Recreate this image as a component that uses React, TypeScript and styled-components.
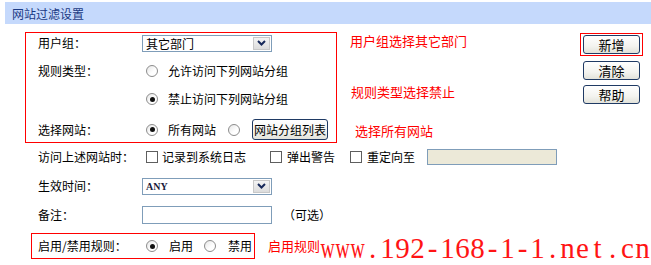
import React from "react";
import styled, { createGlobalStyle } from "styled-components";

const GlobalStyle = createGlobalStyle`
  html, body { margin: 0; padding: 0; background: #fff; }
  body {
    font-family: "Noto Sans CJK SC", "Noto Sans", sans-serif;
    font-size: 12px;
    color: #000;
  }
  * { box-sizing: border-box; }
`;

const Page = styled.div`
  position: relative;
  width: 651px;
  height: 265px;
  overflow: hidden;
`;

const TitleBar = styled.div`
  margin: 2px 0 0 5px;
  height: 22px;
  background: #c5d9fc;
  display: flex;
  align-items: center;
  padding-left: 7px;
  font-size: 12px;
  color: #1b3a84;
`;

const TopSection = styled.div`
  display: flex;
  align-items: flex-start;
  margin-top: 8px;
`;

const RedBox = styled.div<{ $left: number; $width: number }>`
  margin-left: ${(p) => p.$left}px;
  width: ${(p) => p.$width}px;
  border: 1px solid #ff0000;
  flex: none;
`;

const Row = styled.div<{ $h: number; $pt?: number; $pl?: number }>`
  display: flex;
  align-items: center;
  height: ${(p) => p.$h}px;
  padding-top: ${(p) => p.$pt ?? 0}px;
  padding-left: ${(p) => p.$pl ?? 0}px;
  white-space: nowrap;
`;

const Label = styled.span`
  width: 104px;
  flex: none;
  line-height: 16px;
`;

const Text = styled.span<{ $ml?: number }>`
  margin-left: ${(p) => p.$ml ?? 0}px;
  line-height: 16px;
`;

const Radio = styled.span<{ $checked?: boolean; $ml?: number }>`
  position: relative;
  flex: none;
  width: 12px;
  height: 12px;
  margin-left: ${(p) => p.$ml ?? 4}px;
  border-radius: 50%;
  border: 1px solid #8c8c8c;
  background: linear-gradient(135deg, #e6e6e6, #ffffff 60%);
  &::after {
    content: "";
    display: ${(p) => (p.$checked ? "block" : "none")};
    position: absolute;
    left: 2.5px;
    top: 2.5px;
    width: 5px;
    height: 5px;
    border-radius: 50%;
    background: #111;
  }
`;

const Checkbox = styled.span<{ $ml?: number }>`
  flex: none;
  width: 12px;
  height: 12px;
  margin-left: ${(p) => p.$ml ?? 4}px;
  border: 1px solid #5e5e5e;
  background: #fff;
`;

const SelectBox = styled.div`
  display: flex;
  align-items: stretch;
  width: 130px;
  height: 17px;
  border: 1px solid #7f9db9;
  background: #fff;
`;

const SelectValue = styled.span<{ $latin?: boolean }>`
  flex: 1;
  padding-left: 3px;
  display: flex;
  align-items: center;
  font-family: ${(p) =>
    p.$latin ? '"Liberation Serif", serif' : '"Noto Sans CJK SC", sans-serif'};
  font-weight: ${(p) => (p.$latin ? 700 : 400)};
  font-size: ${(p) => (p.$latin ? "10px" : "12px")};
  color: ${(p) => (p.$latin ? "#1a1a3a" : "#000")};
  line-height: 15px;
`;

const SelectArrow = styled.span`
  width: 17px;
  margin: 1px;
  display: flex;
  align-items: center;
  justify-content: center;
  background: linear-gradient(#f4f4f4, #dcdcdc);
  border: 1px solid #c8c8c8;
`;

const TextInput = styled.div<{ $w: number; $h: number; $ml?: number; $disabled?: boolean }>`
  flex: none;
  width: ${(p) => p.$w}px;
  height: ${(p) => p.$h}px;
  margin-left: ${(p) => p.$ml ?? 0}px;
  border: 1px solid #7f9db9;
  background: ${(p) => (p.$disabled ? "#ece9d8" : "#fff")};
`;

const Button = styled.button<{ $w: number; $h: number; $ml?: number; $mt?: number; $fs?: number }>`
  flex: none;
  width: ${(p) => p.$w}px;
  height: ${(p) => p.$h}px;
  margin-left: ${(p) => p.$ml ?? 0}px;
  margin-top: ${(p) => p.$mt ?? 0}px;
  padding: 0;
  border: 1px solid #1f3a64;
  border-radius: 3px;
  background: linear-gradient(#ffffff, #f3f3ef 60%, #e2e2da);
  font-family: "Noto Sans CJK SC", sans-serif;
  font-size: ${(p) => p.$fs ?? 13}px;
  line-height: 1;
  color: #000;
  display: flex;
  align-items: center;
  justify-content: center;
`;

const NotesColumn = styled.div`
  flex: 1;
  margin-left: 13px;
  display: flex;
  flex-direction: column;
  align-items: flex-start;
`;

const Note = styled.span<{ $mt?: number; $ml?: number }>`
  margin-top: ${(p) => p.$mt ?? 0}px;
  margin-left: ${(p) => p.$ml ?? 0}px;
  color: #ff0000;
  font-size: 13px;
  line-height: 16px;
  white-space: nowrap;
`;

const ButtonsColumn = styled.div`
  flex: none;
  width: 63px;
  margin-right: 8px;
  margin-top: 1px;
  display: flex;
  flex-direction: column;
  align-items: flex-start;
`;

const RedFrame = styled.div`
  border: 1px solid #ff0000;
  padding: 1px 2px;
`;

const BottomRow = styled.div`
  display: flex;
  align-items: center;
  margin-top: 4px;
`;

const Watermark = styled.div`
  position: absolute;
  left: 320px;
  top: 233px;
  display: flex;
  font-family: "Liberation Serif", serif;
  font-size: 29px;
  line-height: 30px;
  color: #ff1414;
`;

const Glyph = styled.span<{ $narrow?: boolean }>`
  width: 15px;
  text-align: center;
  display: inline-flex;
  justify-content: center;
  overflow: visible;
  transform: ${(p) => (p.$narrow ? "scaleX(0.68)" : "none")};
`;

const Chevron = () => (
  <svg width="9" height="6" viewBox="0 0 9 6">
    <path d="M1 1 L4.5 4.5 L8 1" fill="none" stroke="#17295a" strokeWidth="2" />
  </svg>
);

const Select: React.FC<{ value: string; latin?: boolean }> = ({ value, latin }) => (
  <SelectBox>
    <SelectValue $latin={latin}>{value}</SelectValue>
    <SelectArrow>
      <Chevron />
    </SelectArrow>
  </SelectBox>
);

const watermark = "www.192-168-1-1.net.cn";

export default function App() {
  return (
    <Page>
      <GlobalStyle />
      <TitleBar>网站过滤设置</TitleBar>

      <TopSection>
        <RedBox $left={25} $width={312}>
          <Row $h={20} $pl={12}>
            <Label>用户组：</Label>
            <Select value="其它部门" />
          </Row>
          <Row $h={36} $pl={12}>
            <Label>规则类型：</Label>
            <Radio />
            <Text $ml={10}>允许访问下列网站分组</Text>
          </Row>
          <Row $h={20} $pl={12}>
            <Label />
            <Radio $checked />
            <Text $ml={10}>禁止访问下列网站分组</Text>
          </Row>
          <Row $h={33} $pt={8} $pl={12}>
            <Label>选择网站：</Label>
            <Radio $checked />
            <Text $ml={10}>所有网站</Text>
            <Radio $ml={12} />
            <Button $w={76} $h={21} $ml={12} $fs={12}>
              网站分组列表
            </Button>
          </Row>
        </RedBox>

        <NotesColumn>
          <Note $mt={1}>用户组选择其它部门</Note>
          <Note $mt={35} $ml={1}>规则类型选择禁止</Note>
          <Note $mt={23} $ml={5}>选择所有网站</Note>
        </NotesColumn>

        <ButtonsColumn>
          <RedFrame>
            <Button $w={57} $h={19}>新增</Button>
          </RedFrame>
          <Button $w={57} $h={19} $ml={3} $mt={5}>清除</Button>
          <Button $w={57} $h={19} $ml={3} $mt={5}>帮助</Button>
        </ButtonsColumn>
      </TopSection>

      <Row $h={28} $pl={38}>
        <Label>访问上述网站时：</Label>
        <Checkbox />
        <Text $ml={4}>记录到系统日志</Text>
        <Checkbox $ml={24} />
        <Text $ml={5}>弹出警告</Text>
        <Checkbox $ml={15} />
        <Text $ml={5}>重定向至</Text>
        <TextInput $w={130} $h={16} $ml={12} $disabled />
      </Row>
      <Row $h={30} $pl={38}>
        <Label>生效时间：</Label>
        <Select value="ANY" latin />
      </Row>
      <Row $h={28} $pl={38}>
        <Label>备注：</Label>
        <TextInput $w={130} $h={18} />
        <Text $ml={11}>（可选）</Text>
      </Row>

      <BottomRow>
        <RedBox $left={31} $width={224}>
          <Row $h={24} $pl={6}>
            <Label>启用/禁用规则：</Label>
            <Radio $checked />
            <Text $ml={11}>启用</Text>
            <Radio $ml={11} />
            <Text $ml={12}>禁用</Text>
          </Row>
        </RedBox>
        <Note $ml={13}>启用规则</Note>
      </BottomRow>

      <Watermark>
        {watermark.split("").map((c, i) => (
          <Glyph key={i} $narrow={c === "w"}>
            {c}
          </Glyph>
        ))}
      </Watermark>
    </Page>
  );
}
